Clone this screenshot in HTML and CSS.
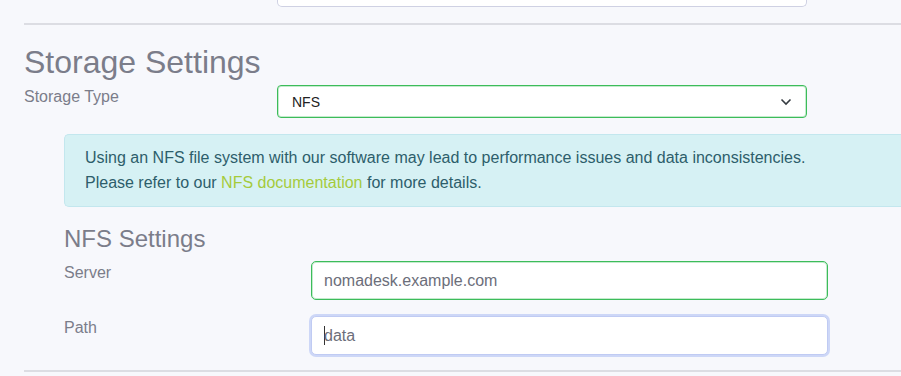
FILE: index.html
```html
<!DOCTYPE html>
<html lang="en">
<head>
    <meta charset="UTF-8">
    <meta name="viewport" content="width=device-width, initial-scale=1.0">
    <title>Storage Settings</title>
    <link rel="stylesheet" href="styles.css">
</head>
<body>
    <div class="page">
        <div class="prev-row">
            <div class="prev-input"></div>
        </div>
        <hr class="divider">

        <h2 class="title">Storage Settings</h2>
        <div class="row">
            <label class="label">Storage Type</label>
            <div class="select">
                <span>NFS</span>
                <svg class="chevron" width="12" height="8" viewBox="0 0 12 8">
                    <path d="M1.5 1.5 L6 6 L10.5 1.5" fill="none" stroke="#343a40" stroke-width="1.6"/>
                </svg>
            </div>
        </div>

        <div class="nested">
            <div class="alert">
                Using an NFS file system with our software may lead to performance issues and data inconsistencies.<br>
                Please refer to our <a href="#" class="link">NFS documentation</a> for more details.
            </div>

            <h3 class="subtitle">NFS Settings</h3>
            <div class="row sub-row">
                <label class="label sub-label">Server</label>
                <div class="input valid">nomadesk.example.com</div>
            </div>
            <div class="row sub-row">
                <label class="label sub-label">Path</label>
                <div class="input focused"><span class="caret"></span>data</div>
            </div>
        </div>

        <hr class="divider bottom">
    </div>
</body>
</html>
```

FILE: styles.css
```css
*{
    box-sizing: border-box;
}
body{
    margin: 0;
    background-color: #f7f8fc;
    font-family: "Liberation Sans", Arial, sans-serif;
    color: #7b7d8a;
    overflow: hidden;
}
.page{
    padding-left: 24px;
}
.prev-row{
    height: 7px;
    padding-left: 253px;
}
.prev-input{
    width: 530px;
    height: 7px;
    background-color: #fff;
    border: 1px solid #cfd1e3;
    border-top: none;
    border-radius: 0 0 5px 5px;
}
.divider{
    margin: 16px 0 0 0;
    border: none;
    border-top: 2px solid #dcdde3;
}
.title{
    margin: 19px 0 0 0;
    font-size: 32px;
    font-weight: normal;
    line-height: 36px;
    color: #7b7d8a;
}
.row{
    display: flex;
    align-items: flex-start;
    margin-top: 5px;
}
.label{
    width: 253px;
    font-size: 16px;
    line-height: 18px;
    padding-top: 3px;
}
.select{
    width: 530px;
    height: 33px;
    background-color: #fff;
    border: 1px solid #3cbc5a;
    box-shadow: inset 0 0 0 1px rgba(60, 188, 90, 0.3);
    border-radius: 4px;
    display: flex;
    align-items: center;
    justify-content: space-between;
    padding: 0 14px 0 14px;
    font-size: 14px;
    color: #222;
}
.chevron{
    margin-top: 1px;
}
.nested{
    padding-left: 40px;
}
.alert{
    margin-top: 16px;
    background-color: #d6f1f4;
    border: 1px solid #c3e7ee;
    border-right: none;
    border-radius: 5px 0 0 5px;
    padding: 10px 20px 11px 20px;
    font-size: 16px;
    line-height: 25px;
    color: #2d5e6b;
}
.link{
    color: #a5cb3c;
    text-decoration: none;
}
.subtitle{
    margin: 18px 0 0 0;
    font-size: 24px;
    font-weight: normal;
    line-height: 28px;
    color: #7b7d8a;
}
.sub-row{
    margin-top: 8px;
}
.sub-row + .sub-row{
    margin-top: 16px;
}
.sub-label{
    width: 247px;
    padding-top: 3px;
}
.input{
    width: 517px;
    height: 39px;
    display: flex;
    align-items: center;
    background-color: #fff;
    border: 1px solid #cfd1e3;
    border-radius: 5px;
    padding: 0 12px;
    font-size: 16px;
    color: #6c6e7a;
}
.valid{
    border-color: #3cbc5a;
    box-shadow: inset 0 0 0 1px rgba(60, 188, 90, 0.3);
}
.focused{
    border-color: #c0cbf3;
    box-shadow: 0 0 0 2px #cdd7f7;
}
.caret{
    width: 1px;
    height: 19px;
    background-color: #333;
    margin-right: -1px;
}
.bottom{
    margin-top: 15px;
}
```
